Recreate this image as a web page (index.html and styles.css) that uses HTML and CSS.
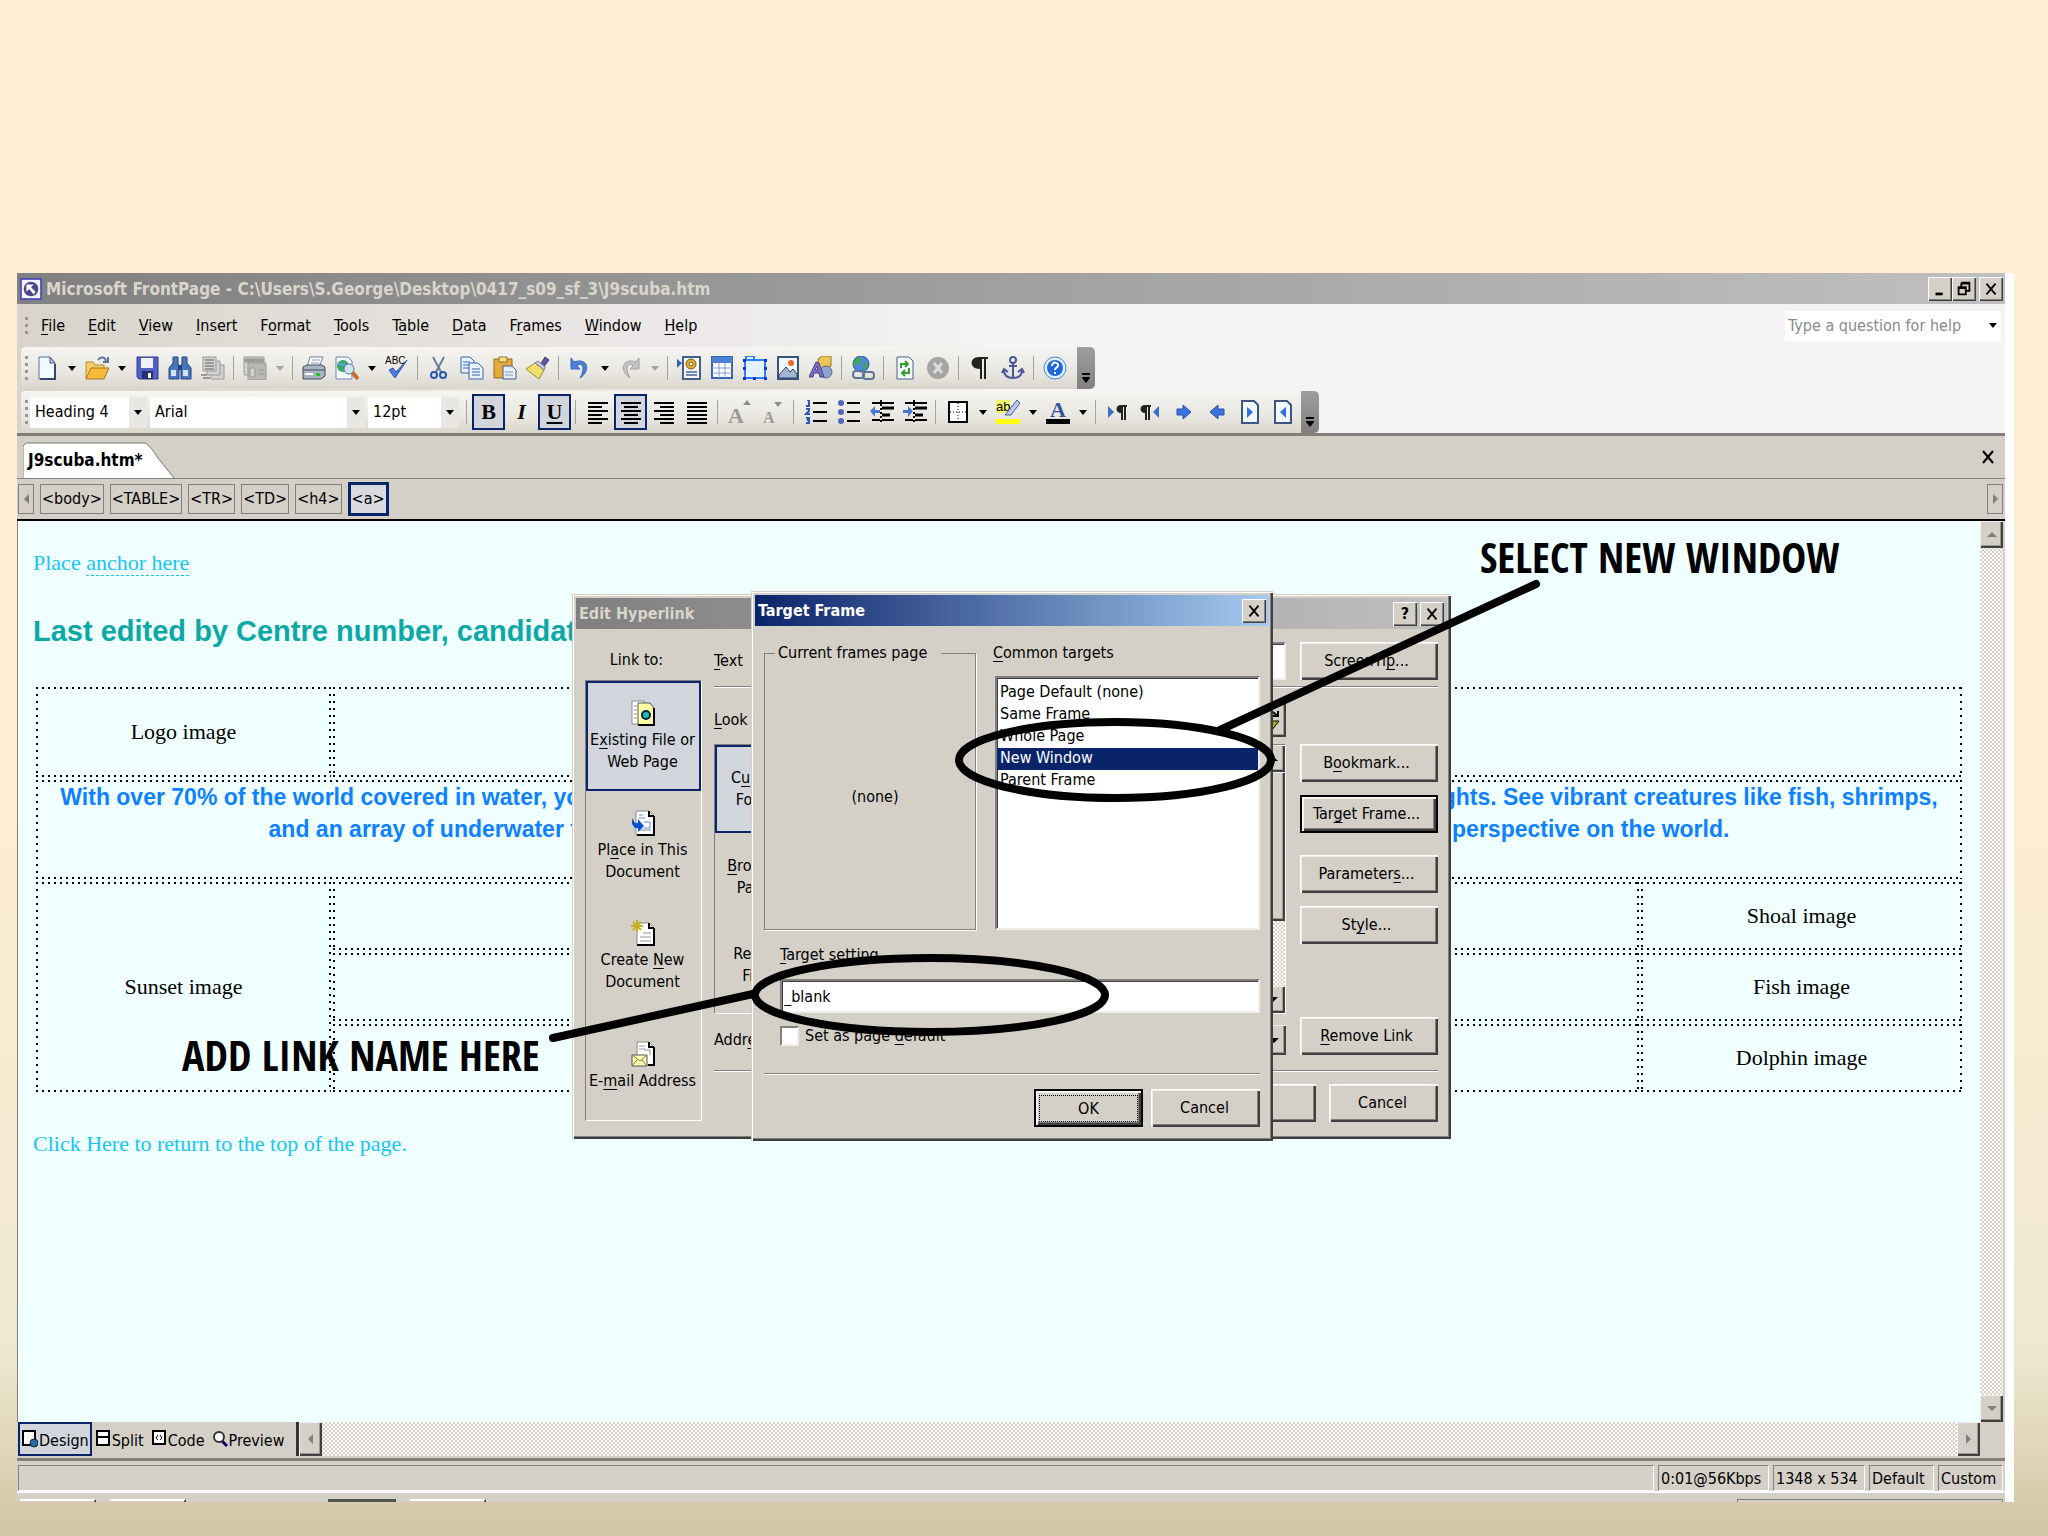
FILE: index.html
```html
<!DOCTYPE html>
<html lang="en">
<head>
<meta charset="UTF-8" />
<meta name="viewport" content="width=device-width, initial-scale=1" />
<title>Microsoft FrontPage - J9scuba.htm</title>
<link rel="stylesheet" href="styles.css">
</head>
<body>

<main class="window">
  <header class="titlebar">
    <svg class="app-icon" viewBox="0 0 24 24"><rect width="24" height="24" fill="#4a4ab8"/><rect x="2" y="2" width="20" height="20" fill="#f4f4ff"/><circle cx="12" cy="12" r="8" fill="#4c4690"/><path d="M7 7h8l-3 3 5 5-2 3-5-6-3 3z" fill="#fff"/></svg>
    <h1>Microsoft FrontPage - C:\Users\S.George\Desktop\0417_s09_sf_3\J9scuba.htm</h1>
    <div class="win-buttons">
      <button class="win-btn" aria-label="Minimize"><svg viewBox="0 0 20 20"><path d="M5 14h8v3H5z"/></svg></button>
      <button class="win-btn" aria-label="Restore"><svg viewBox="0 0 20 20"><path d="M7 3h9v9h-3M7 3v4M7 4h9M4 8h8v8H4zM4 9h8" fill="none" stroke="#000" stroke-width="2"/></svg></button>
      <button class="win-btn close" aria-label="Close"><svg viewBox="0 0 20 20"><path d="M5 4l10 12M15 4L5 16" fill="none" stroke="#000" stroke-width="2"/></svg></button>
    </div>
  </header>

  <div class="bars">
    <nav class="menubar">
      <span class="grip"></span>
      <button><u>F</u>ile</button>
      <button><u>E</u>dit</button>
      <button><u>V</u>iew</button>
      <button><u>I</u>nsert</button>
      <button>F<u>o</u>rmat</button>
      <button><u>T</u>ools</button>
      <button>T<u>a</u>ble</button>
      <button><u>D</u>ata</button>
      <button>F<u>r</u>ames</button>
      <button><u>W</u>indow</button>
      <button><u>H</u>elp</button>
      <div class="ask">
        <input type="text" placeholder="Type a question for help" aria-label="Type a question for help">
        <button class="drop" aria-label="Recent questions"></button>
      </div>
    </nav>

    <div class="toolbar">
      <span class="grip"></span>
      <button class="tool" aria-label="New"><svg viewBox="0 0 24 24"><path d="M4 1h11l5 6v16H4z" fill="#f4f8ff" stroke="#5a6fa8"/><path d="M15 1v6h5z" fill="#b8c8e8" stroke="#44557f"/><path d="M20 8v15H5" fill="none" stroke="#33446e" stroke-width="2"/></svg></button>
      <button class="drop" aria-label="New options"></button>
      <button class="tool" aria-label="Open"><svg viewBox="0 0 24 24"><path d="M1 6h7l2 3h9v13H1z" fill="#f3cf6b" stroke="#b98a2a"/><path d="M6 12h18l-5 11H1z" fill="#f9b93d" stroke="#a9741c"/><path d="M13 4c3-4 7-3 8 1m2-4v5h-5" fill="none" stroke="#5b7399" stroke-width="2"/></svg></button>
      <button class="drop" aria-label="Open options"></button>
      <button class="tool" aria-label="Save"><svg viewBox="0 0 24 24"><path d="M2 1h21v22H4l-2-2z" fill="#5260c4" stroke="#303a92"/><rect x="6" y="2" width="12" height="10" fill="#eef1fb"/><path d="M7 15h11v8H7z" fill="#23306a"/><path d="M13 17h3v5h-3z" fill="#fff"/></svg></button>
      <button class="tool" aria-label="Find"><svg viewBox="0 0 24 24"><path d="M5 1h5v6l1 4v12H1V12l4-5zM14 1h5v6l4 5v11H13V11l1-4z" fill="#4876be" stroke="#23427f"/><path d="M10 9h4v5h-4z" fill="#23427f"/><path d="M3 14h5v6H3zM15 14h5v6h-5z" fill="#d2e2f8"/></svg></button>
      <button class="tool" aria-label="Publish"><svg viewBox="0 0 24 24" fill="#d4d2cf" stroke="#9b9a98"><path d="M10 9h13v14H10z"/><path d="M6 5h13v14H6z"/><path d="M2 1h13v14H2z"/><path d="M4 4h9M4 7h9M4 10h9M4 13h9M0 19h6M2 22h7" stroke-width="2"/></svg></button>
      <span class="sep"></span>
      <button class="tool" aria-label="Layout"><svg viewBox="0 0 24 24" fill="#d4d2cf" stroke="#9b9a98"><path d="M1 1h20v18H1z"/><path d="M2 3h18v3H2z" fill="#9b9a98"/><path d="M5 7h18v17H5z" fill="#b9b8b6"/><path d="M7 12h5v9H7zM15 14h6M15 18h6"/></svg></button>
      <button class="drop off" aria-label="Layout options"></button>
      <span class="sep"></span>
      <button class="tool" aria-label="Print"><svg viewBox="0 0 24 24"><path d="M8 1h13l-4 10H5z" fill="#fff" stroke="#6d7fa0"/><path d="M10 4h8M9 7h8" stroke="#8a9ab8"/><path d="M1 11l4-2h15l3 2v9l-4 3H1z" fill="#aab3c0" stroke="#434d60"/><path d="M1 14h22" stroke="#434d60"/><path d="M14 17h4v3h-4z" fill="#28c22e"/><path d="M3 18h8" stroke="#fff" stroke-width="2"/></svg></button>
      <button class="tool" aria-label="Preview in browser"><svg viewBox="0 0 24 24"><path d="M1 1h12l4 4v18H1z" fill="#f4f8ff" stroke="#6d82ad"/><circle cx="8" cy="10" r="6" fill="#3fa66a"/><path d="M4 9c3-4 5 3 8 0" stroke="#5aa0e8" stroke-width="2" fill="none"/><path d="M17 16l6 7" stroke="#c8702a" stroke-width="4"/><circle cx="14" cy="13" r="5" fill="#cfe4f6" stroke="#66788f"/></svg></button>
      <button class="drop" aria-label="Preview options"></button>
      <button class="tool" aria-label="Spelling"><svg viewBox="0 0 24 24"><text x="0" y="8" class="abc">ABC</text><path d="M4 14l6 8L22 4l-11 12-3-4z" fill="#4c7ce0" stroke="#2b55b0"/></svg></button>
      <span class="sep"></span>
      <button class="tool" aria-label="Cut"><svg viewBox="0 0 24 24"><path d="M6 1l8 15M17 1l-8 15" stroke="#6b7f9b" stroke-width="2"/><circle cx="7" cy="19" r="3" fill="none" stroke="#2b55b0" stroke-width="2"/><circle cx="16" cy="19" r="3" fill="none" stroke="#2b55b0" stroke-width="2"/></svg></button>
      <button class="tool" aria-label="Copy"><svg viewBox="0 0 24 24" fill="#eaf2ff" stroke="#3a62b4"><path d="M1 1h9l4 4v12H1z"/><path d="M3 6h7M3 9h8M3 12h6"/><path d="M9 7h9l5 5v11H9z"/><path d="M12 13h8M12 16h8M12 19h8"/></svg></button>
      <button class="tool" aria-label="Paste"><svg viewBox="0 0 24 24"><path d="M1 3h18v19H1z" fill="#e3ac3c" stroke="#94691a"/><path d="M6 1h8v5H6z" fill="#f5e27d" stroke="#8d742a"/><path d="M10 10h9l4 4v9H10z" fill="#e6eefc" stroke="#465a88"/><path d="M12 16h8M12 19h8" stroke="#7e93bf"/></svg></button>
      <button class="tool" aria-label="Format painter"><svg viewBox="0 0 24 24"><path d="M14 9l5-8 4 3-6 8z" fill="#6252a5" stroke="#43377c"/><path d="M9 7l9 7-5 9L0 13z" fill="#efdf6c" stroke="#a08b22"/><path d="M9 7l9 7 1-3-7-6z" fill="#c8cde0" stroke="#737a94"/></svg></button>
      <span class="sep"></span>
      <button class="tool" aria-label="Undo"><svg viewBox="0 0 24 24"><path d="M3 2v11h9l-3-3c5-5 9 2 3 12 11-7 8-21-6-16z" fill="#4a80d8" stroke="#3566b8"/></svg></button>
      <button class="drop" aria-label="Undo options"></button>
      <button class="tool" aria-label="Redo"><svg viewBox="0 0 24 24"><path d="M21 2v11h-9l3-3c-5-5-9 2-3 12C1 15 4 1 18 6z" fill="#c4c3c1" stroke="#a3a2a0"/></svg></button>
      <button class="drop off" aria-label="Redo options"></button>
      <span class="sep"></span>
      <button class="tool" aria-label="Web component"><svg viewBox="0 0 24 24"><path d="M6 1h17v22H6z" fill="#f6f8fc" stroke="#44618e" stroke-width="2"/><path d="M0 3v9l5-5z" fill="#2f62b8"/><circle cx="14" cy="8" r="5" fill="#e0b23c" stroke="#7a5a10"/><circle cx="14" cy="8" r="2" fill="#fff" stroke="#7a5a10"/><path d="M9 16h11M9 19h11" stroke="#6d86b0" stroke-width="2"/></svg></button>
      <button class="tool" aria-label="Insert table"><svg viewBox="0 0 24 24"><path d="M2 1h20v21H2z" fill="#fff" stroke="#3863b0" stroke-width="2"/><path d="M2 1h20v6H2z" fill="#4f82d4"/><path d="M9 7v15M15 7v15M2 12h20M2 17h20" stroke="#7c9ed6"/></svg></button>
      <button class="tool" aria-label="Insert layer"><svg viewBox="0 0 24 24"><path d="M2 4h20v18H2zM3 0h8v4H3z" fill="#e4f1ff" stroke="#2a80ff" stroke-width="2"/><path d="M0 3h3v3H0zM21 3h3v3h-3zM0 21h3v3H0zM21 21h3v3h-3zM0 11h3v3H0zM21 11h3v3h-3zM10 21h3v3h-3z" fill="#1030d8"/></svg></button>
      <button class="tool" aria-label="Insert picture"><svg viewBox="0 0 24 24"><path d="M2 1h20v22H2z" fill="#f2f7ff" stroke="#37527f" stroke-width="2"/><circle cx="15" cy="7" r="3" fill="#ef6b28"/><path d="M3 19l7-8 4 5 3-3 4 5v4H3z" fill="#a3b6d4" stroke="#2e4266"/></svg></button>
      <button class="tool" aria-label="Drawing"><svg viewBox="0 0 24 24"><path d="M9 3l4-3h9v10l-3 3H9z" fill="#ecc65a" stroke="#94762a"/><circle cx="17" cy="16" r="6" fill="#8ea4cc" stroke="#516690"/><path d="M0 21L7 6l3 1 5 14h-4l-1-4H5l-1 4zM6 14h3L8 10z" fill="#7a6cc4" stroke="#4a3f90"/></svg></button>
      <span class="sep"></span>
      <button class="tool" aria-label="Insert hyperlink"><svg viewBox="0 0 24 24"><circle cx="10" cy="8" r="8" fill="#4c86d8" stroke="#2f5c9a"/><path d="M5 3c4-4 6 0 4 3s-5 2-6 4c-2-2 0-5 2-7zM12 6c3 0 5 2 4 6l-4 1z" fill="#3eaa50"/><rect x="2" y="15" width="11" height="7" rx="3" fill="none" stroke="#5b7596" stroke-width="2"/><rect x="12" y="16" width="11" height="7" rx="3" fill="none" stroke="#5b7596" stroke-width="2"/></svg></button>
      <span class="sep"></span>
      <button class="tool" aria-label="Refresh"><svg viewBox="0 0 24 24"><path d="M4 1h12l4 4v18H4z" fill="#f6faff" stroke="#46618c"/><path d="M8 12V8h6m-2-3l3 3-3 3M16 12v5h-6m2-3l-3 3 3 3" fill="none" stroke="#35a030" stroke-width="2"/></svg></button>
      <button class="tool" aria-label="Stop"><svg viewBox="0 0 24 24"><circle cx="12" cy="12" r="11" fill="#a5a4a2"/><path d="M8 7l8 10M16 7L8 17" stroke="#dedcd8" stroke-width="3"/></svg></button>
      <span class="sep"></span>
      <button class="tool" aria-label="Show marks"><svg viewBox="0 0 24 24"><path d="M20 1v2h-2v20h-2V3h-2v20h-2V13C1 13 1 1 11 1z" fill="#222"/></svg></button>
      <button class="tool" aria-label="Bookmark"><svg viewBox="0 0 24 24" fill="none" stroke="#4a5a96" stroke-width="2"><circle cx="12" cy="4" r="3"/><path d="M12 7v15M8 10h8M3 14c0 6 4 8 9 8s9-2 9-8M1 17l2-4 4 3M23 17l-2-4-4 3"/></svg></button>
      <span class="sep"></span>
      <button class="tool" aria-label="Help"><svg viewBox="0 0 24 24"><circle cx="12" cy="12" r="11" fill="#e2f0ff" stroke="#3b85e8"/><circle cx="12" cy="12" r="8" fill="#2168dc"/><path d="M9 10c0-5 7-4 6 0-1 2-3 2-3 4M12 16v2" fill="none" stroke="#fff" stroke-width="2"/></svg></button>
      <button class="more" aria-label="Toolbar options"></button>
    </div>

    <div class="toolbar format">
      <span class="grip"></span>
      <div class="combo style-box"><select aria-label="Style"><option>Heading 4</option></select></div>
      <div class="combo font-box"><select aria-label="Font"><option>Arial</option></select></div>
      <div class="combo size-box"><select aria-label="Font size"><option>12pt</option></select></div>
      <span class="sep"></span>
      <button class="tool letter on"><b>B</b></button>
      <button class="tool letter"><i>I</i></button>
      <button class="tool letter on"><u>U</u></button>
      <span class="sep"></span>
      <button class="tool" aria-label="Align left"><svg viewBox="0 0 24 24"><path d="M2 3h20M2 7h14M2 11h20M2 15h14M2 19h20M2 23h14" stroke="#000" stroke-width="2"/></svg></button>
      <button class="tool on" aria-label="Center"><svg viewBox="0 0 24 24"><path d="M2 3h20M5 7h14M2 11h20M5 15h14M2 19h20M5 23h14" stroke="#000" stroke-width="2"/></svg></button>
      <button class="tool" aria-label="Align right"><svg viewBox="0 0 24 24"><path d="M2 3h20M8 7h14M2 11h20M8 15h14M2 19h20M8 23h14" stroke="#000" stroke-width="2"/></svg></button>
      <button class="tool" aria-label="Justify"><svg viewBox="0 0 24 24"><path d="M2 3h20M2 7h20M2 11h20M2 15h20M2 19h20M2 23h20" stroke="#000" stroke-width="2"/></svg></button>
      <span class="sep"></span>
      <button class="tool" aria-label="Increase font size"><svg viewBox="0 0 24 24"><text x="0" y="23" class="grow">A</text><path d="M15 5l4-5 4 5z" fill="#8f8e8c"/></svg></button>
      <button class="tool" aria-label="Decrease font size"><svg viewBox="0 0 24 24"><text x="2" y="23" class="shrink">A</text><path d="M13 2h8l-4 5z" fill="#8f8e8c"/></svg></button>
      <span class="sep"></span>
      <button class="tool" aria-label="Numbering"><svg viewBox="0 0 24 24"><path d="M9 3h14M9 12h14M9 21h14" stroke="#000" stroke-width="2"/><path d="M3 0h2v6M2 6h4M2 9h3v2l-3 3h4M2 18h3v5H2M3 20h3" fill="none" stroke="#2f55b5" stroke-width="2"/></svg></button>
      <button class="tool" aria-label="Bullets"><svg viewBox="0 0 24 24"><path d="M10 3h13M10 12h13M10 21h13" stroke="#000" stroke-width="2"/><g fill="#5068b8"><circle cx="4" cy="3" r="3"/><circle cx="4" cy="12" r="3"/><circle cx="4" cy="21" r="3"/></g></svg></button>
      <button class="tool" aria-label="Decrease indent"><svg viewBox="0 0 24 24"><path d="M2 3h22M12 20h12M2 20h8" stroke="#000" stroke-width="2"/><path d="M12 8h12M12 15h8" stroke="#000" stroke-width="3"/><path d="M11 0v24" stroke="#000" stroke-width="2" stroke-dasharray="2 2"/><path d="M0 11l5-5v4h5v3H5v4z" fill="#4a78d0"/></svg></button>
      <button class="tool" aria-label="Increase indent"><svg viewBox="0 0 24 24"><path d="M2 3h22M12 20h12M2 20h8" stroke="#000" stroke-width="2"/><path d="M12 8h12M12 15h8" stroke="#000" stroke-width="3"/><path d="M11 0v24" stroke="#000" stroke-width="2" stroke-dasharray="2 2"/><path d="M10 11L5 6v4H0v3h5v4z" fill="#4a78d0"/></svg></button>
      <span class="sep"></span>
      <button class="tool" aria-label="Borders"><svg viewBox="0 0 24 24"><path d="M3 2h18v20H3z" fill="#fff" stroke="#000" stroke-width="2"/><path d="M12 3v18M4 12h16" stroke="#000" stroke-dasharray="1 2"/></svg></button>
      <button class="drop" aria-label="Border options"></button>
      <button class="tool" aria-label="Highlight"><svg viewBox="0 0 24 24"><rect width="14" height="13" fill="#f3f36a"/><text x="0" y="11" class="ab">ab</text><path d="M21 0l3 3-9 12H9z" fill="#b9c8ec" stroke="#4a5a96"/><path d="M0 19h24v5H0z" fill="#ff0"/></svg></button>
      <button class="drop" aria-label="Highlight options"></button>
      <button class="tool" aria-label="Font color"><svg viewBox="0 0 24 24"><text x="4" y="17" class="fc">A</text><path d="M0 19h24v5H0z"/></svg></button>
      <button class="drop" aria-label="Font color options"></button>
      <span class="sep"></span>
      <button class="tool" aria-label="Left to right"><svg viewBox="0 0 24 24"><path d="M2 6v12l6-6z" fill="#3a6cc8"/><path d="M21 5v2h-1v13h-2V7h-1v13h-2v-7c-6 0-6-8 0-8z" fill="#222"/></svg></button>
      <button class="tool" aria-label="Right to left"><svg viewBox="0 0 24 24"><path d="M20 6v12l-6-6z" fill="#3a6cc8"/><path d="M12 5v2h-1v13H9V7H8v13H6v-7C0 13 0 5 6 5z" fill="#222"/></svg></button>
      <button class="tool" aria-label="Next"><svg viewBox="0 0 24 24"><path d="M5 9h6V5l8 7-8 7v-4H5z" fill="#3c72e0" stroke="#2a50a8"/></svg></button>
      <button class="tool" aria-label="Previous"><svg viewBox="0 0 24 24"><path d="M19 9h-6V5l-8 7 8 7v-4h6z" fill="#3c72e0" stroke="#2a50a8"/></svg></button>
      <button class="tool" aria-label="Next page"><svg viewBox="0 0 24 24"><path d="M4 1h12l4 4v18H4z" fill="#f2f8ff" stroke="#3c5684" stroke-width="2"/><path d="M9 7v11l6-6z" fill="#2f70e0"/></svg></button>
      <button class="tool" aria-label="Previous page"><svg viewBox="0 0 24 24"><path d="M4 1h12l4 4v18H4z" fill="#f2f8ff" stroke="#3c5684" stroke-width="2"/><path d="M15 7v11l-6-6z" fill="#2f70e0"/></svg></button>
      <button class="more" aria-label="Toolbar options"></button>
    </div>
  </div>

  <div class="tabstrip">
    <button class="tab">
      <svg viewBox="0 0 152 36" preserveAspectRatio="none"><path d="M0 36V4l3-3h119c6 3 9 10 13 15l16 20z" fill="#fff"/><path d="M0 36V4l3-3h119c6 3 9 10 13 15l16 20" fill="none" stroke="#777"/></svg>
      <span>J9scuba.htm*</span>
    </button>
    <button class="tab-close" aria-label="Close page"><svg viewBox="0 0 14 14"><path d="M2 1l10 12M12 1L2 13" stroke="#000" stroke-width="2"/></svg></button>
  </div>

  <div class="tagbar">
    <button class="tag-nav left" aria-label="Scroll tags left"></button>
    <button class="tag">&lt;body&gt;</button>
    <button class="tag">&lt;TABLE&gt;</button>
    <button class="tag">&lt;TR&gt;</button>
    <button class="tag">&lt;TD&gt;</button>
    <button class="tag">&lt;h4&gt;</button>
    <button class="tag current">&lt;a&gt;</button>
    <button class="tag-nav right" aria-label="Scroll tags right"></button>
  </div>

  <div class="editor">
    <article class="page">
      <p class="top-anchor">Place <a href="#top">anchor here</a></p>
      <h2>Last edited by Centre number, candidate number and name</h2>
      <table>
        <colgroup><col class="c1"><col><col class="c3"></colgroup>
        <tr class="r1"><td>Logo image</td><td colspan="2"></td></tr>
        <tr class="r2"><td colspan="3"><h4>With over 70% of the world covered in water, you can discover a whole new world of life, colour and many truly breathtaking sights. See vibrant creatures like fish, shrimps,<br>and an array of underwater flora and fauna. Scuba diving will give you a fresh, new and completely different perspective on the world.</h4></td></tr>
        <tr class="r3"><td rowspan="3">Sunset image</td><td></td><td>Shoal image</td></tr>
        <tr class="r3"><td></td><td>Fish image</td></tr>
        <tr class="r3"><td></td><td>Dolphin image</td></tr>
      </table>
      <p class="back"><a href="#top">Click Here to return to the top of the page.</a></p>
    </article>
    <div class="vscroll">
      <button class="raised up" aria-label="Scroll up"></button>
      <button class="raised down" aria-label="Scroll down"></button>
    </div>
  </div>

  <div class="viewbar">
    <button class="view on"><svg viewBox="0 0 16 18"><path d="M1 1h12v14H1z" fill="#fff" stroke="#000" stroke-width="2"/><circle cx="12" cy="13" r="4" fill="#2b6aa8" stroke="#123"/></svg>Design</button>
    <button class="view"><svg viewBox="0 0 16 18"><path d="M2 1h12v14H2zM2 7h12" fill="#fff" stroke="#000" stroke-width="2"/></svg>Split</button>
    <button class="view"><svg viewBox="0 0 16 18"><path d="M2 1h12v13H2z" fill="#fff" stroke="#000" stroke-width="2"/><path d="M7 5L5 8l2 2M9 5l2 3-2 2" fill="none" stroke="#000"/></svg>Code</button>
    <button class="view"><svg viewBox="0 0 16 18"><path d="M10 11l5 5" stroke="#00007a" stroke-width="3"/><circle cx="7" cy="7" r="5" fill="#fff" stroke="#333" stroke-width="2"/></svg>Preview</button>
    <div class="hscroll">
      <button class="raised prev" aria-label="Scroll left"></button>
      <button class="raised next" aria-label="Scroll right"></button>
    </div>
    <span class="corner"></span>
  </div>

  <footer class="status">
    <span class="cell wide"></span>
    <span class="cell speed">0:01@56Kbps</span>
    <span class="cell dims">1348 x 534</span>
    <span class="cell mode">Default</span>
    <span class="cell mode">Custom</span>
  </footer>
  <div class="taskbar"><i class="task"></i><i class="task"></i><i class="task pressed"></i><i class="task"></i><i class="tray"></i></div>
</main>

<section class="dialog edit-link" aria-label="Edit Hyperlink">
  <header class="dlg-title idle">
    <h2>Edit Hyperlink</h2>
    <button class="win-btn" aria-label="Help"><b>?</b></button>
    <button class="win-btn" aria-label="Close"><svg viewBox="0 0 20 20"><path d="M5 4l10 12M15 4L5 16" fill="none" stroke="#000" stroke-width="2"/></svg></button>
  </header>
  <div class="edit-body">
    <div class="link-col">
      <p>Link to:</p>
      <div class="link-panel">
        <button class="place on"><svg viewBox="0 0 24 26"><path d="M1 1h12v23H1z" fill="#fff" stroke="#888"/><path d="M3 6h3M3 10h3M3 14h3M3 18h3" stroke="#888"/><path d="M7 3h12l4 5v17H7z" fill="#ffffa8" stroke="#555"/><path d="M23 8v17H7" fill="none" stroke="#000" stroke-width="2"/><circle cx="15" cy="15" r="4" fill="#2bb" stroke="#024" stroke-width="2"/></svg>E<u>x</u>isting File or<br>Web Page</button>
        <button class="place"><svg viewBox="0 0 24 26"><path d="M5 1h13l5 5v19H5z" fill="#fff" stroke="#888"/><path d="M23 6v19H6M18 1v5h5" fill="none" stroke="#000" stroke-width="2"/><path d="M8 5h4M8 8h6M13 12h6v6h-6M8 20h12" fill="none" stroke="#68c"/><path d="M1 8l3 5h3v-4l6 7-6 6v-4H4l-3-4z" fill="#0a50d0"/></svg>Pl<u>a</u>ce in This<br>Document</button>
        <button class="place"><svg viewBox="0 0 24 26"><path d="M6 3h12l5 5v17H6z" fill="#fff" stroke="#888"/><path d="M23 8v17H6M18 3v5h5" fill="none" stroke="#000" stroke-width="2"/><path d="M12 13h8M9 17h11M9 21h11" stroke="#999"/><path d="M6 0v12M0 6h12M2 2l8 8M10 2l-8 8" stroke="#c8b020" stroke-width="2"/></svg>Create <u>N</u>ew<br>Document</button>
        <button class="place"><svg viewBox="0 0 24 26"><path d="M6 1h12l5 5v18H6z" fill="#fff" stroke="#888"/><path d="M23 6v18h-6M18 1v5h5" fill="none" stroke="#000" stroke-width="2"/><path d="M8 5h6M8 8h6M13 9h6v5" fill="none" stroke="#999"/><path d="M1 14h15v11H1z" fill="#ffffa8" stroke="#555"/><path d="M1 14l8 6 7-6M1 25l5-6M16 25l-5-6" fill="none" stroke="#777"/></svg>E-<u>m</u>ail Address</button>
      </div>
    </div>
    <div class="edit-main">
      <div class="row text-row">
        <label for="display"><u>T</u>ext</label><input id="display" class="sunken" type="text">
        <button class="btn">ScreenTi<u>p</u>...</button>
      </div>
      <div class="split">
        <div class="browse">
          <div class="row look-row">
            <label for="look"><u>L</u>ook in:</label><input id="look" class="sunken" type="text">
            <button class="raised browse-btn" aria-label="Browse"><svg viewBox="0 0 24 26"><path d="M14 3l8 6M22 4v5h-5" fill="none" stroke="#000" stroke-width="2"/><path d="M4 14h19l-7 9H4z" fill="#a8a818" stroke="#000"/></svg></button>
          </div>
          <div class="files">
            <div class="file-tabs">
              <button class="place on">C<u>u</u>rrent<br>Folder</button>
              <button class="place"><u>B</u>rowsed<br>Pages</button>
              <button class="place">Re<u>c</u>ent<br>Files</button>
            </div>
            <div class="file-list"></div>
            <div class="file-scroll">
              <button class="raised up" aria-label="Scroll up"></button>
              <span class="raised thumb"></span>
              <button class="raised down" aria-label="Scroll down"></button>
            </div>
          </div>
          <div class="row addr-row">
            <label for="addr">Addr<u>e</u>ss:</label><input id="addr" class="sunken" type="text">
            <button class="raised down" aria-label="Address list"></button>
          </div>
        </div>
        <div class="side">
          <button class="btn">B<u>o</u>okmark...</button>
          <button class="btn default">Tar<u>g</u>et Frame...</button>
          <button class="btn spaced">Parameter<u>s</u>...</button>
          <button class="btn">St<u>y</u>le...</button>
          <button class="btn last"><u>R</u>emove Link</button>
        </div>
      </div>
      <div class="edit-foot">
        <button class="btn small">OK</button>
        <button class="btn small">Cancel</button>
      </div>
    </div>
  </div>
</section>

<section class="dialog target" aria-label="Target Frame">
  <header class="dlg-title">
    <h2>Target Frame</h2>
    <button class="win-btn" aria-label="Close"><svg viewBox="0 0 20 20"><path d="M5 4l10 12M15 4L5 16" fill="none" stroke="#000" stroke-width="2"/></svg></button>
  </header>
  <div class="target-body">
    <div class="frames">
      <fieldset>
        <legend>Current frames page</legend>
        (none)
      </fieldset>
      <div class="common">
        <label for="targets"><u>C</u>ommon targets</label>
        <select id="targets" class="sunken" size="5">
          <option>Page Default (none)</option>
          <option>Same Frame</option>
          <option>Whole Page</option>
          <option selected>New Window</option>
          <option>Parent Frame</option>
        </select>
      </div>
    </div>
    <div class="setting">
      <label for="setting"><u>T</u>arget setting</label>
      <input id="setting" class="sunken" type="text" value="_blank">
      <div class="check">
        <input id="default" type="checkbox"><label for="default">Set as page <u>d</u>efault</label>
      </div>
    </div>
    <div class="target-foot">
      <button class="btn small default focus"><span>OK</span></button>
      <button class="btn small">Cancel</button>
    </div>
  </div>
</section>

<!-- callouts drawn over the dialogs -->
<svg class="marks">
  <g fill="none" stroke="#000" stroke-width="8" stroke-linecap="round">
    <ellipse cx="1115" cy="760" rx="156" ry="38"/>
    <path d="M1220 730L1536 584"/>
    <ellipse cx="930" cy="995" rx="175" ry="37"/>
    <path d="M553 1038L753 994"/>
  </g>
</svg>
<p class="note select-note">SELECT NEW WINDOW</p>
<p class="note name-note">ADD LINK NAME HERE</p>

</body>
</html>
```
FILE: styles.css
```css
* {
  box-sizing: border-box;
}
body {
  margin: 0;
  min-height: 100vh;
  padding: 273px 34px 34px 17px;
  display: flex;
  position: relative;
  background: linear-gradient(#ffeed2 0, #ffeed2 50%, #eee8d0 88%, #d2c5a2 100%);
  font-family: "DejaVu Sans Condensed", "DejaVu Sans", sans-serif;
  font-size: 16px;
  line-height: 22px;
  color: #000;
}
button, input, select {
  font: inherit;
  color: inherit;
  border-radius: 0;
}
button {
  padding: 0;
  border: 0;
  background: none;
  white-space: nowrap;
}
u {
  text-underline-offset: 3px;
}
h1, h2, h4, p {
  margin: 0;
}

/* main window */
.window {
  flex: 1;
  min-width: 0;
  display: flex;
  flex-direction: column;
  background: #d4d0c8;
  border-right: 9px solid #fff;
}
.titlebar {
  height: 31px;
  padding: 0 2px 0 3px;
  display: flex;
  align-items: center;
  gap: 4px;
  background: linear-gradient(90deg, #808080, #c0c0c0);
}
.titlebar h1 {
  flex: 1;
  font-size: 17px;
  color: #d9d5cd;
}
.app-icon {
  width: 22px;
  height: 26px;
}
.win-buttons {
  display: flex;
}
.win-btn {
  width: 24px;
  height: 24px;
  display: flex;
  align-items: center;
  justify-content: center;
  background: #d4d0c8;
  box-shadow: inset 1px 1px #fff, inset -1px -1px #404040, inset -2px -2px #808080;
}
.win-btn svg {
  width: 18px;
  height: 18px;
}
.win-btn.close {
  margin-left: 3px;
}

/* menu and toolbars */
.bars {
  background: linear-gradient(90deg, #d8d4cc, #f5f3f5 50%);
  border-bottom: 3px solid #827f7b;
}
.menubar {
  height: 43px;
  padding: 0 4px 0 8px;
  display: flex;
  align-items: center;
  gap: 23px;
}
.grip {
  width: 3px;
  height: 24px;
  margin: 0 2px 0 4px;
  background: repeating-linear-gradient(#9a9792 0 3px, transparent 3px 7px);
}
.menubar .grip {
  height: 17px;
  margin: 0 -10px 0 0;
}
.ask {
  width: 216px;
  height: 30px;
  margin-left: auto;
  display: flex;
  background: #fff;
}
.ask input {
  flex: 1;
  min-width: 0;
  padding: 0 3px;
  border: 0;
  background: none;
}
.ask input::placeholder {
  color: #8a8a8a;
  opacity: 1;
}
.drop {
  width: 17px;
  height: 30px;
  display: flex;
  align-items: center;
  justify-content: center;
}
.drop::before, .combo::after {
  content: "";
  border: 4px solid transparent;
  border-top: 5px solid #000;
  border-bottom: 0;
}
.drop.off::before {
  border-top-color: #a5a39f;
}
.toolbar {
  width: fit-content;
  height: 42px;
  margin: 0 0 2px 4px;
  display: flex;
  align-items: center;
  background: linear-gradient(#f5f4f1, #e9e7e1 60%, #d9d6cd);
  border-radius: 4px;
}
.toolbar.format {
  margin-bottom: 0;
}
.tool {
  width: 33px;
  height: 36px;
  display: flex;
  align-items: center;
  justify-content: center;
}
.tool svg {
  width: 24px;
  height: 24px;
}
.tool.on {
  background: #d2d5dc;
  border: 2px solid #0a246a;
}
.letter {
  font: 22px "Liberation Serif", serif;
  font-weight: bold;
}
.sep {
  width: 1px;
  height: 24px;
  margin: 0 4px;
  background: #a5a39d;
}
.format .sep {
  margin-right: 5px;
}
.more {
  align-self: stretch;
  width: 18px;
  margin-left: 6px;
  display: flex;
  align-items: flex-end;
  justify-content: center;
  padding-bottom: 6px;
  background: linear-gradient(#a09d9f, #827f80);
  border-radius: 0 5px 5px 0;
}
.format .more {
  margin-left: 2px;
}
.more::before {
  content: "";
  width: 8px;
  height: 10px;
  background: linear-gradient(#000 0 2px, transparent 2px 4px, #000 4px);
  clip-path: polygon(0 0, 100% 0, 100% 50%, 50% 100%, 0 50%);
}
.abc, .ab {
  font: 10px "Liberation Sans", sans-serif;
}
.ab {
  font-size: 13px;
}
.grow, .shrink, .fc {
  font: bold 22px "Liberation Serif", serif;
  fill: #9b9a98;
}
.shrink {
  font-size: 16px;
}
.fc {
  fill: #34579c;
}
.combo {
  height: 31px;
  margin-right: 3px;
  display: flex;
  align-items: center;
  background: linear-gradient(#e9e7e3, #e9e7e3) right / 18px 100% no-repeat #fff;
}
.combo::after {
  margin: 0 5px;
}
.combo select {
  flex: 1;
  min-width: 0;
  padding: 0 5px;
  appearance: none;
  border: 0;
  background: none;
}
.style-box {
  width: 117px;
}
.font-box {
  width: 215px;
}
.size-box {
  width: 91px;
}

/* page tab and tag selector */
.tabstrip {
  height: 43px;
  padding: 0 10px 0 6px;
  display: flex;
  align-items: flex-end;
  justify-content: space-between;
  border-bottom: 1px solid #808080;
}
.tab {
  width: 152px;
  height: 36px;
  display: grid;
  align-items: center;
  font-size: 17px;
  font-weight: bold;
  text-align: left;
}
.tab svg, .tab span {
  grid-area: 1 / 1;
}
.tab svg {
  width: 152px;
  height: 36px;
}
.tab span {
  padding-left: 5px;
}
.tab-close {
  align-self: center;
  width: 14px;
  height: 14px;
  display: flex;
}
.tagbar {
  height: 42px;
  padding: 0 2px 0 1px;
  display: flex;
  align-items: center;
  gap: 6px;
  border-bottom: 2px solid #000;
}
.tag {
  height: 30px;
  padding: 0 1px;
  border: 1px solid #808080;
}
.tag.current {
  height: 34px;
  border: 3px solid #0a246a;
  background: #d8dae0;
}
.tag-nav {
  width: 16px;
  height: 30px;
  display: flex;
  align-items: center;
  justify-content: center;
  border: 1px solid #808080;
}
.tag-nav.right {
  margin-left: auto;
}
.tag-nav::before, .raised::before {
  content: "";
  border: 5px solid transparent;
}
.tag-nav.left::before, .prev::before {
  border-right-color: #808080;
  border-left: 0;
}
.tag-nav.right::before, .next::before {
  border-left-color: #808080;
  border-right: 0;
}

/* document */
.editor {
  flex: 1;
  display: flex;
  border-left: 1px solid #808080;
}
.page {
  flex: 1;
  min-width: 0;
  padding: 28px 16px 0 15px;
  background: #f0ffff;
  font-family: "Liberation Serif", serif;
  font-size: 22px;
  line-height: 28px;
  color: #18c4f2;
}
.page a {
  color: inherit;
  text-decoration: none;
}
.top-anchor a {
  border-bottom: 1px dashed;
}
.page h2 {
  margin: 35px 0 34px;
  font: bold 29px/38px "Liberation Sans", sans-serif;
  color: #0ca8a6;
  white-space: nowrap;
}
.page table {
  width: 100%;
  padding-left: 1px;
  table-layout: fixed;
  border-spacing: 2px 3px;
  color: #000;
  text-align: center;
}
.c1 {
  width: 295px;
}
.c3 {
  width: 321px;
}
.page td {
  padding: 1px;
  background:
    repeating-linear-gradient(90deg, #000 0 2px, transparent 2px 6px) top / 100% 2px no-repeat,
    repeating-linear-gradient(90deg, #000 0 2px, transparent 2px 6px) bottom / 100% 2px no-repeat,
    repeating-linear-gradient(#000 0 2px, transparent 2px 7px) left / 2px 100% no-repeat,
    repeating-linear-gradient(#000 0 2px, transparent 2px 7px) right / 2px 100% no-repeat;
}
.r1 td {
  height: 90px;
}
.r2 td {
  height: 99px;
  vertical-align: top;
}
.r3 td {
  height: 68px;
}
.page h4 {
  font: bold 23px/32px "Liberation Sans", sans-serif;
  color: #0f80ff;
  white-space: nowrap;
}
.back {
  margin-top: 35px;
}

/* scroll bars */
.raised {
  display: flex;
  align-items: center;
  justify-content: center;
  background: #d4d0c8;
  box-shadow: inset 1px 1px #f2f0ec, inset -2px -2px #404040, inset -3px -3px #9a9792;
}
.up::before {
  border-bottom-color: #808080;
  border-top: 0;
}
.down::before {
  border-top-color: #808080;
  border-bottom: 0;
}
.vscroll, .hscroll, .file-scroll {
  display: flex;
  justify-content: space-between;
  background: repeating-conic-gradient(#d4d0c8 0 25%, #fff 0 50%) 0 0 / 4px 4px;
}
.vscroll {
  width: 23px;
  margin-right: 2px;
  flex-direction: column;
}
.vscroll .raised {
  height: 27px;
}
.viewbar {
  height: 34px;
  padding-left: 1px;
  display: flex;
}
.view {
  padding: 3px 4px 0 3px;
  display: flex;
  align-items: center;
  gap: 1px;
}
.view svg {
  width: 16px;
  height: 18px;
  margin-bottom: 4px;
}
.view.on {
  padding: 3px 1px 0 2px;
  border: 2px solid #0a246a;
  background: #d2d5dc;
}
.hscroll {
  flex: 1;
  margin-left: 8px;
  border-left: 3px solid #333;
}
.hscroll .raised {
  width: 23px;
}
.corner {
  width: 25px;
}
.status {
  margin-top: 2px;
  padding: 4px 2px 0 1px;
  display: flex;
  gap: 4px;
  border-top: 3px solid #827f7b;
}
.cell {
  height: 26px;
  padding: 0 2px;
  line-height: 26px;
  border: 1px solid #808080;
  border-right-color: #fff;
  border-bottom-color: #fff;
  white-space: nowrap;
}
.wide {
  flex: 1;
}
.speed {
  width: 111px;
}
.dims {
  width: 92px;
}
.mode {
  width: 65px;
}
.taskbar {
  height: 11px;
  padding: 5px 2px 0 3px;
  display: flex;
  align-items: flex-end;
  gap: 14px;
  border-top: 2px solid #fff;
}
.task {
  width: 76px;
  height: 3px;
  border-top: 2px solid #fff;
  border-right: 2px solid #444;
}
.task.pressed {
  width: 68px;
  margin-left: 128px;
  border-top: 3px solid #4d5651;
}
.tray {
  width: 266px;
  height: 3px;
  margin-left: auto;
  border: 1px solid #808080;
  border-bottom: 0;
}

/* dialogs */
.dialog {
  position: absolute;
  padding: 4px;
  background: #d4d0c8;
  box-shadow: inset 1px 1px #d4d0c8, inset 2px 2px #fff, inset -2px -2px #404040, inset -3px -3px #808080;
}
.edit-link {
  left: 572px;
  top: 594px;
  width: 879px;
}
.target {
  left: 751px;
  top: 591px;
  width: 522px;
}
.dlg-title {
  height: 31px;
  padding: 0 3px;
  display: flex;
  align-items: center;
  gap: 3px;
  background: linear-gradient(90deg, #0a246a, #a6caf0);
}
.dlg-title.idle {
  background: linear-gradient(90deg, #808080, #c0c0c0);
}
.dlg-title h2 {
  flex: 1;
  font-size: 16px;
  color: #fff;
}
.idle h2 {
  color: #d9d5cd;
}
.btn {
  width: 138px;
  height: 38px;
  padding-right: 5px;
  background: #d4d0c8;
  box-shadow: inset 1px 1px #fff, inset 2px 2px #f0eeea, inset -2px -2px #404040, inset -3px -3px #808080;
}
.btn.small {
  width: 109px;
  padding-right: 2px;
}
.btn.default {
  border: 2px solid #000;
}
.btn.focus {
  padding: 3px;
}
.focus span {
  display: block;
  height: 27px;
  line-height: 25px;
  border: 1px dotted #000;
}
.sunken {
  border: 2px solid #808080;
  border-right-color: #f0eeea;
  border-bottom-color: #f0eeea;
  background: #fff;
  box-shadow: inset 1px 1px #404040;
}
.edit-body {
  padding: 13px 9px 13px;
  display: flex;
  gap: 12px;
}
.link-col {
  width: 117px;
}
.link-col p {
  margin: 7px 0 9px;
  padding-right: 14px;
  text-align: center;
}
.link-panel {
  height: 441px;
  border: 1px solid #808080;
  border-right-color: #fff;
  border-bottom-color: #fff;
}
.place {
  width: 100%;
  height: 110px;
  display: block;
  padding-right: 2px;
  line-height: 22px;
}
.place svg {
  display: block;
  width: 24px;
  height: 26px;
  margin: 0 auto 3px;
}
.place.on {
  background: #d2d5dc;
  border: 2px solid #0a246a;
}
.edit-main {
  flex: 1;
}
.row {
  display: flex;
  align-items: center;
}
.row input {
  flex: 1;
  min-width: 0;
  align-self: stretch;
}
.text-row {
  height: 45px;
  padding-bottom: 6px;
  gap: 14px;
  border-bottom: 1px solid #808080;
  box-shadow: 0 1px #fff;
}
.split {
  height: 384px;
  padding-top: 15px;
  display: flex;
  gap: 14px;
  border-bottom: 1px solid #808080;
  box-shadow: 0 1px #fff;
}
.browse {
  flex: 1;
}
.look-row {
  height: 35px;
  gap: 8px;
}
.browse-btn {
  width: 36px;
  height: 35px;
}
.browse-btn svg {
  width: 24px;
  height: 26px;
}
.browse-btn::before {
  display: none;
}
.files {
  height: 270px;
  margin: 7px 0 10px;
  display: flex;
  border: 1px solid #808080;
  border-right-color: #fff;
  border-bottom-color: #fff;
}
.file-tabs {
  width: 88px;
}
.file-tabs .place {
  height: 88px;
}
.file-list {
  flex: 1;
  background: #fff;
}
.file-scroll {
  width: 24px;
  flex-direction: column;
  justify-content: flex-start;
}
.file-scroll .raised {
  height: 27px;
}
.file-scroll .thumb {
  height: 149px;
  margin-bottom: auto;
}
.thumb::before {
  display: none;
}
.files .down::before, .addr-row .down::before {
  border-top-color: #000;
}
.files .up::before {
  border-bottom-color: #000;
}
.addr-row {
  height: 32px;
}
.addr-row button {
  width: 24px;
  height: 30px;
}
.side {
  padding-top: 42px;
  display: flex;
  flex-direction: column;
  gap: 13px;
}
.side .spaced {
  margin-top: 9px;
}
.side .last {
  margin-top: 60px;
}
.edit-foot {
  padding-top: 13px;
  display: flex;
  justify-content: flex-end;
  gap: 13px;
}

.target-body {
  padding: 16px 9px 10px;
}
.frames {
  display: flex;
  gap: 17px;
}
fieldset {
  width: 212px;
  height: 288px;
  margin: 0;
  padding: 0 0 0 10px;
  display: flex;
  align-items: center;
  justify-content: center;
  border: 1px solid #808080;
  box-shadow: 1px 1px #fff;
}
legend {
  padding: 0 14px 0 3px;
}
.common {
  flex: 1;
  display: flex;
  flex-direction: column;
  gap: 12px;
}
.common select {
  flex: 1;
  margin-left: 2px;
  padding: 4px 0 0;
  overflow: hidden;
}
.common option {
  min-height: 22px;
  padding: 0 3px;
  line-height: 22px;
}
.common option:checked {
  background: #0a246a linear-gradient(#0a246a, #0a246a);
  color: #fff;
  -webkit-text-fill-color: #fff;
}
.setting {
  padding: 14px 0 26px 16px;
  display: flex;
  flex-direction: column;
  border-bottom: 1px solid #808080;
  box-shadow: 0 1px #fff;
}
.setting .sunken {
  height: 34px;
  margin: 13px 0 12px;
  padding: 0 2px;
}
.check {
  display: flex;
  align-items: center;
  gap: 6px;
}
.check input {
  appearance: none;
  width: 19px;
  height: 20px;
  margin: 0;
  border: 2px solid #808080;
  border-right-color: #f0eeea;
  border-bottom-color: #f0eeea;
  background: #fff;
}
.target-foot {
  padding-top: 15px;
  display: flex;
  justify-content: flex-end;
  gap: 8px;
}

/* callouts */
.marks {
  position: absolute;
  left: 0;
  top: 0;
  width: 100%;
  height: 100%;
  pointer-events: none;
}
.note {
  position: absolute;
  font: bold 42px/44px "Open Sans Condensed", "Noto Sans Condensed", Carlito, Lato, sans-serif;
  white-space: nowrap;
}
.select-note {
  left: 1480px;
  top: 535px;
}
.name-note {
  left: 182px;
  top: 1033px;
}
```
